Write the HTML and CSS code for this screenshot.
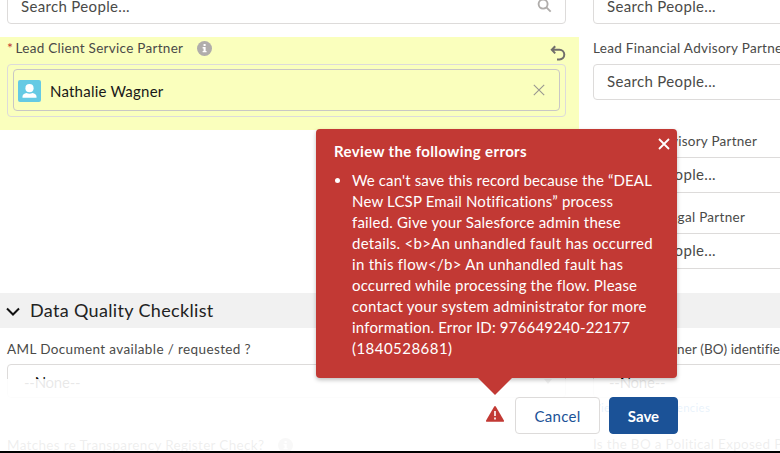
FILE: index.html
```html
<!DOCTYPE html>
<html lang="en">
<head>
<meta charset="utf-8">
<title>Edit record</title>
<link rel="stylesheet" href="styles.css">
</head>
<body>
<div class="page">
  <main class="columns people">
    <section class="col left">
      <div class="input first"><span class="placeholder">Search People...</span>
        <svg class="search" viewBox="0 0 16 16"><circle cx="6.5" cy="6.5" r="4.8"/><path d="M10 10l4.6 4.6"/></svg>
      </div>
      <div class="edited">
        <div class="label-row">
          <span class="required">*</span><span class="label t-lcsp">Lead Client Service Partner</span>
          <svg class="info" viewBox="0 0 16 16"><circle cx="8" cy="8" r="8"/><path d="M7 3.3h2.2v2H7zM6 6.5h3.2v4.2h1v1.4H6v-1.4h1V7.9H6z"/></svg>
          <svg class="undo" viewBox="0 0 16 16"><path d="M5.2 1.200L1.800 4.800l3.400 3.600M2 4.800h7.500a4.700 4.700 0 0 1 0 9.600H7"/></svg>
        </div>
        <div class="lookup"><div class="pill">
          <svg class="avatar" viewBox="0 0 23 22"><rect width="23" height="22" rx="2"/><ellipse cx="11.5" cy="8.2" rx="4.1" ry="4.1"/><path d="M4.500 17.700v-1.200c0-1.900 1.700-3 4-3.500q3 1.500 6 0c2.300.5 4 1.600 4 3.500v1.200z"/></svg>
          <span class="name">Nathalie Wagner</span>
          <svg class="remove" viewBox="0 0 12 12"><path d="M.8.8l10.400 10.400M11.200.8L.8 11.200"/></svg>
        </div></div>
      </div>
    </section>
    <section class="col right">
      <div class="input first"><span class="placeholder">Search People...</span></div>
      <div class="field f1"><span class="label">Lead Financial Advisory Partner</span><div class="input"><span class="placeholder">Search People...</span></div></div>
      <div class="field f2"><span class="label t-ra">Lead Risk Advisory Partner</span><div class="input"><span class="placeholder">Search People...</span></div></div>
      <div class="field f3"><span class="label">Lead Tax &amp; Legal Partner</span><div class="input"><span class="placeholder">Search People...</span></div></div>
    </section>
  </main>
  <h2 class="band"><svg viewBox="0 0 14 10"><path d="M1 1.500l6 6 6-6"/></svg><span>Data Quality Checklist</span></h2>
  <div class="columns checks">
    <section class="col left">
      <span class="label t-aml">AML Document available / requested ?</span>
      <div class="input"><span class="placeholder none">--None--</span><i class="caret"></i></div>
      <div class="next"><span class="label t-match">Matches re Transparency Register Check?</span>
      <svg class="info" viewBox="0 0 16 16"><circle cx="8" cy="8" r="8"/><path d="M7 3.300h2.200v2H7zM6 6.500h3.200v4.200h1v1.400H6v-1.400h1V7.900H6z"/></svg></div>
    </section>
    <section class="col right">
      <span class="label t-bo">Beneficial Owner (BO) identified?</span>
      <div class="input"><span class="placeholder none">--None--</span></div>
      <span class="dependency">View all dependencies</span>
      <span class="label t-pep">Is the BO a Political Exposed Person?</span>
    </section>
  </div>
  <footer class="footer">
    <svg class="warning" viewBox="0 0 18 16"><path class="tri" d="M8.200.5Q9-.5 9.800.5l8 13.700q.7 1.500-.8 1.500H1Q-.5 15.700.2 14.200z"/><path class="mark" d="M9 5v5M9 11.500v2"/></svg>
    <button class="btn cancel">Cancel</button>
    <button class="btn save">Save</button>
  </footer>
  <div class="baseline"></div>
  <aside class="popover">
    <svg class="close" viewBox="0 0 12 12"><path d="M1 1l10 10M11 1L1 11"/></svg>
    <h3><span>Review the following errors</span></h3>
    <ul><li>
      <span class="e1">We can't save this record because the “DEAL</span><br>
      <span class="e2">New LCSP Email Notifications” process</span><br>
      <span class="e3">failed. Give your Salesforce admin these</span><br>
      <span class="e4">details. &lt;b&gt;An unhandled fault has occurred</span><br>
      <span class="e5">in this flow&lt;/b&gt; An unhandled fault has</span><br>
      <span class="e6">occurred while processing the flow. Please</span><br>
      <span class="e7">contact your system administrator for more</span><br>
      <span class="e8">information. Error ID: 976649240-22177</span><br>
      <span class="e9">(1840528681)</span>
    </li></ul>
  </aside>
</div>
</body>
</html>
```
FILE: styles.css
```css
* { box-sizing: border-box; }
body { margin: 0; font-family: Lato, "Open Sans", sans-serif; color: #4a4a48; }
svg { display: block; flex: none; fill: none; }
.page { position: relative; width: 780px; height: 453px; overflow: hidden; background: #fff; }
.columns { display: flex; }
.people { height: 293px; }
.col { flex: none; }
.left { width: 579px; }
.right { width: 540px; padding-left: 14px; }
.input { display: flex; align-items: center; height: 36px; padding: 0 13px; border: 1px solid #dddbda; border-radius: 4px; background: #fff; }
.first { margin-top: -12px; }
.left > .input { width: 559px; margin-left: 7px; }
.placeholder { font-size: 15px; letter-spacing: .34px; white-space: nowrap; }
.search { width: 15px; height: 15px; margin: -2px 0 0 auto; stroke: #b0adab; stroke-width: 2; }
.label { display: block; font-size: 13.5px; line-height: 18px; letter-spacing: .29px; white-space: nowrap; }
.edited { height: 93px; margin-top: 13px; padding: 2px 13px 0 7px; background: #faffbd; }
.label-row { display: flex; height: 25px; }
.required { width: 8.500px; font-size: 14px; line-height: 18px; color: #c23934; }
.info { width: 15px; height: 15px; margin: 2px 0 0 14px; }
.info circle { fill: #b0adab; }
.info path { fill: #fff; }
.undo { width: 16px; height: 16px; margin: 6px 0 0 auto; stroke: #706e6b; stroke-width: 2; }
.lookup { height: 53px; padding: 4px 5px; border: 1px solid #dddbda; border-radius: 4px; }
.pill { display: flex; align-items: center; height: 42px; padding: 0 14px 0 4px; border: 1px solid #c9c7c5; border-radius: 4px; }
.avatar { width: 23px; height: 22px; margin-top: 1px; fill: #fff; }
.avatar rect { fill: #65cae4; }
.name { margin: 2px 0 0 9px; font-size: 15px; letter-spacing: .22px; color: #181818; }
.remove { width: 12px; height: 12px; margin-left: auto; stroke: #999791; stroke-width: 1.1; }
.f1 { margin-top: 15px; }
.f1 .input { margin-top: 7px; }
.f1 .placeholder { margin-top: -2px; }
.f2 { margin-top: 32px; }
.f2 .input, .f3 .input { margin-top: 7px; }
.f2 .placeholder, .f3 .placeholder { margin-top: -2px; }
.t-ra { letter-spacing: .24px; }
.f3 { margin-top: 15px; }
.band { display: flex; align-items: center; height: 35px; margin: 0; padding-left: 6px; background: #f1f1f1; font-size: 18px; font-weight: 400; letter-spacing: .34px; color: #222; }
.band span { margin-top: -1px; }
.band svg { width: 14px; height: 10px; margin: 2px 10px 0 0; stroke: #111; stroke-width: 2; }
.checks { padding-top: 12px; }
.checks .left > .label { margin-left: 7px; }
.t-aml { letter-spacing: .38px; }
.t-bo { letter-spacing: .1px; }
.checks .input { height: 34px; margin-top: 6px; }
.none { margin-left: 3px; padding-top: 2px; letter-spacing: -.25px; color: #080707; }
.right .none { margin-left: 2px; }
.caret { margin-left: auto; border: 4px solid transparent; border-top: 5px solid #706e6b; border-bottom: 0; }
.next { display: flex; margin: 38px 0 0 7px; }
.t-match { letter-spacing: .32px; }
.dependency { display: block; height: 21px; margin-top: 3px; font-size: 11.500px; letter-spacing: .24px; line-height: 13px; color: #006dcc; }
.t-pep { margin-top: 13px; }
.footer { position: absolute; inset: 379px 0 2px; display: flex; align-items: flex-start; padding: 18px 0 0 486px; background: rgba(255, 255, 255, .91); }
.baseline { position: absolute; inset: 451px 0 0; background: #000; }
.warning { width: 18px; height: 16px; margin: 9px 11px 0 0; }
.tri { fill: #c23934; }
.mark { stroke: #fff; stroke-width: 1.6; }
.btn { height: 37px; padding: 1px 0 0; border: 1px solid #dddbda; border-radius: 4px; background: #fff; font: 15px Lato, sans-serif; color: #1b5297; }
.cancel { width: 85px; margin-right: 9px; letter-spacing: .3px; }
.save { width: 69px; border-color: #1b5297; background: #1b5297; color: #fff; font-weight: 700; }
.popover { position: absolute; left: 316px; top: 129px; width: 361px; height: 249px; padding: 12px 18px; border-radius: 4px; background: #c23934; box-shadow: 0 2px 4px rgba(0, 0, 0, .25); color: #fff; }
.popover::after { content: ""; position: absolute; left: 162px; top: 249px; width: 34px; height: 17px; background: #c23934; clip-path: polygon(0 0, 100% 0, 50% 100%); }
.close { position: absolute; left: 342px; top: 9px; width: 12px; height: 12px; stroke: #fff; stroke-width: 1.8; }
.popover h3 { margin: 0 0 8px; font-size: 15px; line-height: 21px; font-weight: 700; letter-spacing: .37px; }
.popover ul { margin: 0; padding-left: 18px; font-size: 15px; line-height: 21px; white-space: nowrap; }
.e1 { letter-spacing: .12px; }
.e2, .e6 { letter-spacing: .17px; }
.e3, .e8 { letter-spacing: .19px; }
.e4, .e7 { letter-spacing: .27px; }
.e5 { letter-spacing: .29px; }
.e9 { letter-spacing: .46px; }
```
